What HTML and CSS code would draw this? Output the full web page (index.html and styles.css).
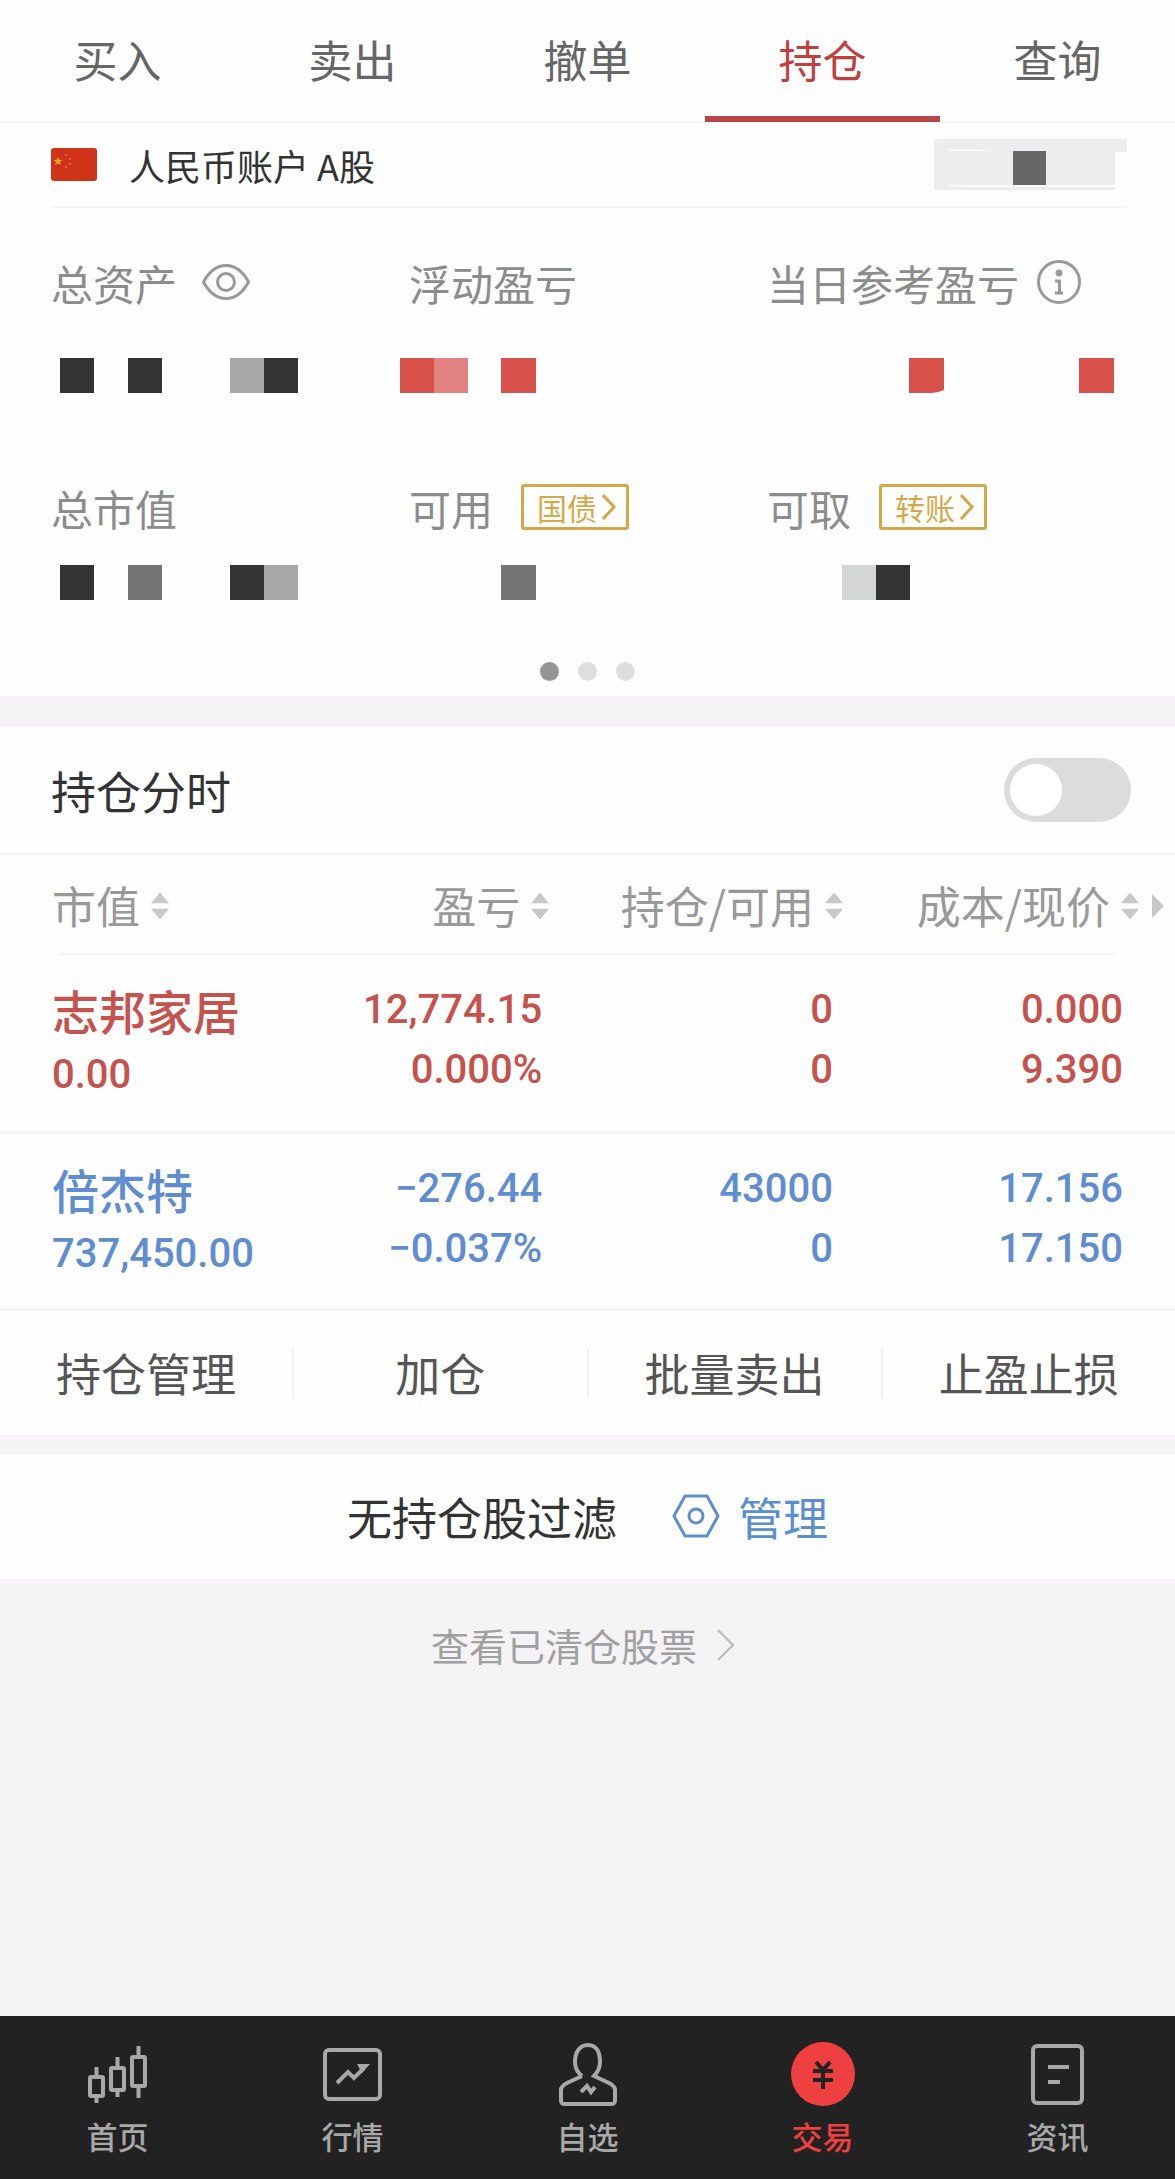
FILE: index.html
```html
<!DOCTYPE html>
<html lang="zh-CN">
<head>
  <meta charset="UTF-8">
  <meta name="viewport" content="width=device-width, initial-scale=1.0">
  <title>持仓</title>
  <link rel="stylesheet" href="styles.css">
</head>
<body>
  <nav class="tabs">
    <a href="#">买入</a>
    <a href="#">卖出</a>
    <a href="#">撤单</a>
    <a href="#" class="active">持仓</a>
    <a href="#">查询</a>
  </nav>

  <main>
    <section class="account">
      <div class="account-bar">
        <svg class="flag" viewBox="0 0 46 33">
          <rect width="46" height="33" rx="3" fill="#cf3418"/>
          <path d="M7 9l1.300 2.800 3 .3-2.200 2 .6 3L7 15.600 4.300 17.100l.6-3-2.200-2 3-.3z" fill="#f6a02c"/>
          <g fill="#e2622a">
            <circle cx="15" cy="7" r="1.300"/>
            <circle cx="19" cy="11" r="1.300"/>
            <circle cx="19" cy="16" r="1.300"/>
            <circle cx="15" cy="19" r="1.300"/>
          </g>
        </svg>
        <span class="account-name">人民币账户 A股</span>
        <svg class="account-mask" viewBox="0 0 193 51">
          <path d="M0 0h193v13h-12v38H0z" fill="#eeecee"/>
          <path d="M14 10.500h30l15 1.500H14zM14 46h167v2H40l-26-1z" fill="#fff"/>
          <rect x="79" y="12" width="33" height="34" fill="#686667"/>
        </svg>
      </div>

      <div class="stats">
        <div class="stat">
          <div class="stat-label">总资产
            <svg class="eye" viewBox="0 0 48 36" fill="none" stroke="#999" stroke-width="3">
              <path d="M1.500 18C8 6 15 1.500 24 1.500S40 6 46.500 18C40 30 33 34.500 24 34.500S8 30 1.500 18z"/>
              <circle cx="24" cy="18" r="8.500"/>
            </svg>
          </div>
          <svg class="mask" viewBox="0 0 340 35">
            <path d="M9 0h34v35H9zM77 0h34v35H77zM213 0h34v35h-34z" fill="#333"/>
            <path d="M179 0h34v35h-34z" fill="#a9a9a9"/>
          </svg>
        </div>
        <div class="stat">
          <div class="stat-label">浮动盈亏</div>
          <svg class="mask" viewBox="0 0 340 35">
            <path d="M-9 0h34v35H-9zM92 0h35v35H92z" fill="#d9514b"/>
            <path d="M25 0h34v35H25z" fill="#e28382"/>
          </svg>
        </div>
        <div class="stat">
          <div class="stat-label">当日参考盈亏
            <svg class="info" viewBox="0 0 44 44" fill="none" stroke="#999" stroke-width="3">
              <circle cx="22" cy="22" r="20.500"/>
              <circle cx="22" cy="13" r="3.500" fill="#999" stroke="none"/>
              <path d="M18 21h4.500v12M18 33h8"/>
            </svg>
          </div>
          <svg class="mask" viewBox="0 0 340 35">
            <path d="M142 0h35v32q-6 3-13 3h-22zM312 0h35v35h-35z" fill="#d9514b"/>
          </svg>
        </div>
      </div>

      <div class="stats stats-second">
        <div class="stat">
          <div class="stat-label">总市值</div>
          <svg class="mask" viewBox="0 0 340 35">
            <path d="M9 0h34v35H9zM179 0h34v35h-34z" fill="#333"/>
            <path d="M77 0h34v35H77z" fill="#757575"/>
            <path d="M213 0h34v35h-34z" fill="#a9a9a9"/>
          </svg>
        </div>
        <div class="stat">
          <div class="stat-label">可用
            <button type="button" class="tag">国债<svg viewBox="0 0 16 28"><path d="M2 2l11 12L2 26"/></svg></button>
          </div>
          <svg class="mask" viewBox="0 0 340 35">
            <path d="M92 0h35v35H92z" fill="#757575"/>
          </svg>
        </div>
        <div class="stat">
          <div class="stat-label">可取
            <button type="button" class="tag">转账<svg viewBox="0 0 16 28"><path d="M2 2l11 12L2 26"/></svg></button>
          </div>
          <svg class="mask" viewBox="0 0 340 35">
            <path d="M75 0h34v35H75z" fill="#d4d6d5"/>
            <path d="M109 0h34v35h-34z" fill="#333"/>
          </svg>
        </div>
      </div>

      <div class="dots">
        <span class="dot current"></span>
        <span class="dot"></span>
        <span class="dot"></span>
      </div>
    </section>

    <section class="positions">
      <div class="switch-row">
        <label for="timeline">持仓分时</label>
        <input type="checkbox" id="timeline" class="switch">
      </div>

      <table class="holdings">
        <thead>
          <tr>
            <th>市值<svg class="sort" viewBox="0 0 20 30"><path d="M10 0l10 12H0zM0 18h20L10 30z"/></svg></th>
            <th>盈亏<svg class="sort" viewBox="0 0 20 30"><path d="M10 0l10 12H0zM0 18h20L10 30z"/></svg></th>
            <th>持仓/可用<svg class="sort" viewBox="0 0 20 30"><path d="M10 0l10 12H0zM0 18h20L10 30z"/></svg></th>
            <th>成本/现价<svg class="sort" viewBox="0 0 20 30"><path d="M10 0l10 12H0zM0 18h20L10 30z"/></svg><svg class="more" viewBox="0 0 12 24"><path d="M0 0l12 12L0 24z"/></svg></th>
          </tr>
        </thead>
        <tbody>
          <tr class="up">
            <td><span class="stock">志邦家居</span><span>0.00</span></td>
            <td><span>12,774.15</span><span>0.000%</span></td>
            <td><span>0</span><span>0</span></td>
            <td><span>0.000</span><span>9.390</span></td>
          </tr>
          <tr class="down">
            <td><span class="stock">倍杰特</span><span>737,450.00</span></td>
            <td><span>−276.44</span><span>−0.037%</span></td>
            <td><span>43000</span><span>0</span></td>
            <td><span>17.156</span><span>17.150</span></td>
          </tr>
        </tbody>
      </table>

      <div class="actions">
        <button type="button">持仓管理</button>
        <button type="button">加仓</button>
        <button type="button">批量卖出</button>
        <button type="button">止盈止损</button>
      </div>
    </section>

    <section class="filter">
      <span>无持仓股过滤</span>
      <a href="#">
        <svg viewBox="0 0 48 44" fill="none" stroke="#5b8fd0" stroke-width="3">
          <path d="M13 2h22l11 20-11 20H13L2 22z" stroke-linejoin="round"/>
          <circle cx="24" cy="22" r="7"/>
        </svg>
        管理
      </a>
    </section>

    <a href="#" class="closed">查看已清仓股票<svg viewBox="0 0 18 32"><path d="M1 1l15 15L1 31"/></svg></a>
  </main>

  <footer class="bottom-nav">
    <a href="#">
      <svg viewBox="0 0 64 64">
        <rect x="4" y="35" width="13" height="19" rx="1"/>
        <rect x="25" y="26" width="13" height="22" rx="1"/>
        <rect x="46" y="15" width="13" height="29" rx="1"/>
        <path d="M10.500 25v10M10.500 54v7M31.500 15v11M31.500 48v7M52.500 4v11M52.500 44v12"/>
      </svg>
      首页
    </a>
    <a href="#">
      <svg viewBox="0 0 64 64">
        <rect x="4" y="8" width="55" height="49" rx="4"/>
        <path d="M16 41l11-11 6 6 10-10" />
        <path d="M36 22h13l-8 9z" fill="#a8a8a8" stroke="none"/>
      </svg>
      行情
    </a>
    <a href="#">
      <svg viewBox="0 0 64 64">
        <path d="M26 35c-5-4-7-8-7-14 0-9 4-17 13-17s12 8 12 17c0 6-2 10-6 14l15 7c4 2 6 4 6 7v10c0 3-1 4-4 4H9c-3 0-4-1-4-4V49c0-3 2-5 6-7l15-7" transform="translate(0 -1)"/>
        <path d="M25 50l6-6 4 6 4-5"/>
      </svg>
      自选
    </a>
    <a href="#" class="active">
      <svg viewBox="0 0 64 64">
        <circle cx="32" cy="32" r="32" fill="#ee4041" stroke="none"/>
        <path d="M25 20l7 8 7-8M22 29h20M22 38h20M32 28v19" stroke="#222"/>
      </svg>
      交易
    </a>
    <a href="#">
      <svg viewBox="0 0 64 64">
        <rect x="7" y="4" width="49" height="57" rx="4"/>
        <path d="M22 25h21M22 40h12"/>
      </svg>
      资讯
    </a>
  </footer>
</body>
</html>
```
FILE: styles.css
```css
* {
  box-sizing: border-box;
}

body {
  display: flex;
  flex-direction: column;
  min-height: 100vh;
  margin: 0;
  background-color: #f5f3f5;
  color: #333;
  font-family: "Noto Sans CJK SC", sans-serif;
  font-size: 44px;
}

a {
  color: inherit;
  text-decoration: none;
}

button {
  margin: 0;
  padding: 0;
  border: none;
  background: none;
  color: inherit;
  font: inherit;
  cursor: pointer;
}

svg {
  flex: none;
}

main {
  flex: 1;
}

/* top tabs */
.tabs {
  display: flex;
  background-color: #fefefe;
  border-bottom: 1px solid #f2f2f2;
}

.tabs a {
  flex: 1;
  height: 122px;
  border-bottom: 6px solid transparent;
  color: #666;
  line-height: 118px;
  text-align: center;
}

.tabs .active {
  border-bottom-color: #b94647;
  color: #c04040;
}

/* account summary */
.account {
  padding-bottom: 15px;
  background-color: #fefefe;
}

.account-bar {
  display: flex;
  align-items: center;
  height: 85px;
  margin: 0 48px 0 51px;
  border-bottom: 2px solid #f6f6f6;
}

.flag {
  width: 46px;
  height: 33px;
}

.account-name {
  flex: 1;
  margin-left: 32px;
  font-size: 36px;
}

.account-mask {
  width: 193px;
  height: 51px;
}

.stats {
  display: grid;
  grid-template-columns: repeat(3, 1fr);
  padding: 44px 50px 0 51px;
}

.stats-second {
  padding-top: 84px;
}

.stat-label {
  display: flex;
  align-items: center;
  height: 60px;
  color: #8c8c8c;
  font-size: 42px;
  white-space: nowrap;
}

.eye {
  width: 48px;
  height: 36px;
  margin-left: 25px;
}

.info {
  width: 44px;
  height: 44px;
  margin-left: 18px;
}

.mask {
  display: block;
  width: 340px;
  height: 35px;
  margin-top: 46px;
  overflow: visible;
}

.stats-second .mask {
  margin-top: 28px;
}

.tag {
  display: flex;
  align-items: center;
  gap: 4px;
  height: 46px;
  margin-left: 28px;
  padding: 0 9px 0 13px;
  border: 3px solid #d5a847;
  border-radius: 3px;
  color: #d5a847;
  font-size: 30px;
  line-height: 36px;
}

.tag svg {
  width: 16px;
  height: 28px;
  fill: none;
  stroke: #d5a847;
  stroke-width: 3;
}

.dots {
  display: flex;
  justify-content: center;
  gap: 19px;
  margin-top: 62px;
}

.dot {
  width: 19px;
  height: 19px;
  border-radius: 50%;
  background-color: #dedede;
}

.dot.current {
  background-color: #959595;
}

/* positions */
.positions {
  margin-top: 31px;
  background-color: #fefefe;
}

.switch-row {
  display: flex;
  align-items: center;
  justify-content: space-between;
  height: 128px;
  padding: 0 44px 0 51px;
  border-bottom: 2px solid #f2f2f2;
  font-size: 45px;
}

.switch {
  appearance: none;
  width: 127px;
  height: 64px;
  margin: 0;
  padding: 6px;
  border-radius: 32px;
  background-color: #dcdcdc;
}

.switch::before {
  content: "";
  display: block;
  width: 52px;
  height: 52px;
  border-radius: 50%;
  background-color: #fff;
}

.switch:checked {
  background-color: #c04040;
}

.switch:checked::before {
  margin-left: auto;
}

.holdings {
  width: 100%;
  table-layout: fixed;
  border-collapse: collapse;
}

.holdings thead tr {
  background: linear-gradient(#f4f4f4, #f4f4f4) 50% 100% / 90% 2px no-repeat;
}

.holdings th {
  height: 100px;
  padding: 0 0 1px;
  color: #999;
  font-weight: 400;
  text-align: right;
  white-space: nowrap;
}

.holdings th:nth-child(1) {
  width: 26%;
}

.holdings th:nth-child(2) {
  width: 21%;
}

.holdings th:nth-child(3) {
  width: 25%;
}

.holdings th:nth-child(4) {
  padding-right: 11px;
}

.holdings th:first-child,
.holdings td:first-child {
  padding-left: 52px;
  text-align: left;
}

.sort {
  width: 18px;
  height: 30px;
  margin: 0 3px 3px 11px;
  fill: #c8c8c8;
}

.more {
  width: 12px;
  height: 24px;
  margin: 0 0 6px 10px;
  fill: #c8c8c8;
}

.holdings td {
  height: 177px;
  padding: 25px 10px 0 0;
  border-bottom: 3px solid #f4f4f4;
  font-family: Roboto, "Noto Sans CJK SC", sans-serif;
  font-size: 40px;
  font-weight: 500;
  line-height: 60px;
  text-align: right;
  vertical-align: top;
}

.holdings td:nth-child(3) {
  padding-right: 13px;
}

.holdings td:nth-child(4) {
  padding-right: 52px;
}

.holdings td span {
  display: block;
}

.holdings .stock {
  margin-bottom: 5px;
  font-family: "Noto Sans CJK SC", sans-serif;
  font-size: 47px;
}

.up {
  color: #c6524d;
}

.down {
  color: #5f8dd0;
}

.actions {
  display: flex;
  align-items: center;
  height: 124px;
}

.actions button {
  flex: 1;
  height: 50px;
  border-right: 2px solid #f2f2f2;
  color: #555;
  font-size: 45px;
  line-height: 50px;
}

.actions button:last-child {
  border-right: none;
}

/* filter row */
.filter {
  display: flex;
  align-items: center;
  justify-content: center;
  gap: 55px;
  height: 125px;
  margin-top: 19px;
  background-color: #fefefe;
  font-size: 45px;
}

.filter a {
  display: flex;
  align-items: center;
  gap: 18px;
  color: #5b8fd0;
}

.filter svg {
  width: 48px;
  height: 44px;
}

.closed {
  display: flex;
  align-items: center;
  justify-content: center;
  gap: 20px;
  margin-top: 36px;
  padding-right: 9px;
  color: #a0a0a0;
  font-size: 38px;
  line-height: 60px;
}

.closed svg {
  width: 18px;
  height: 32px;
  fill: none;
  stroke: #b8b8b8;
  stroke-width: 2;
}

/* bottom navigation */
.bottom-nav {
  display: flex;
  height: 163px;
  padding-top: 26px;
  background-color: #222;
}

.bottom-nav a {
  display: flex;
  flex: 1;
  flex-direction: column;
  align-items: center;
  gap: 7px;
  color: #a8a8a8;
  font-size: 31px;
  font-weight: 500;
  line-height: 46px;
}

.bottom-nav svg {
  width: 64px;
  height: 64px;
  fill: none;
  stroke: #a8a8a8;
  stroke-width: 4;
}

.bottom-nav .active {
  color: #ee4041;
}
```
